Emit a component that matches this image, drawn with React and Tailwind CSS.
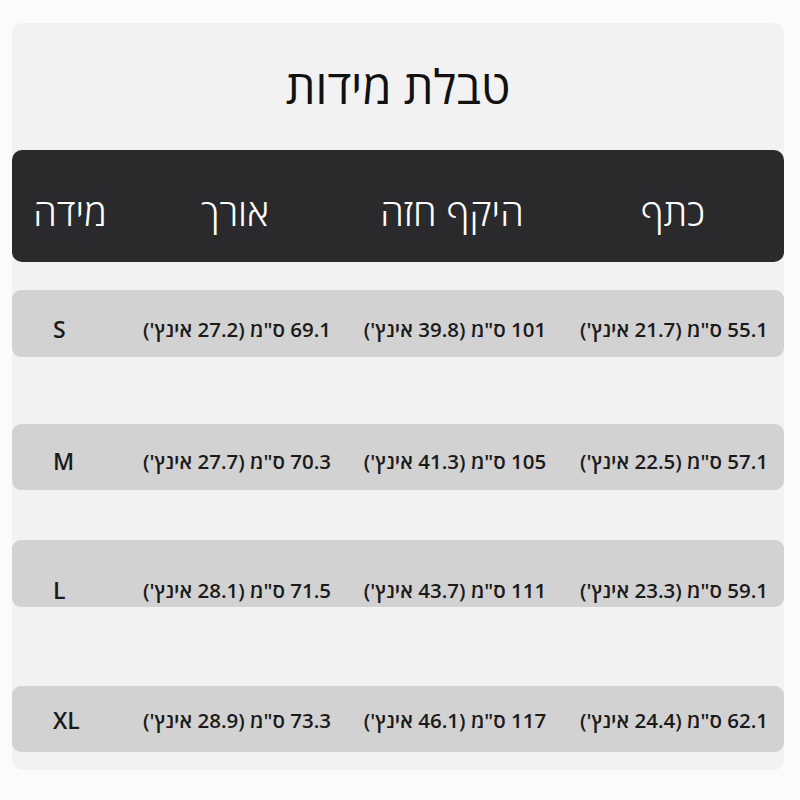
import React from "react";

const rows = [
  { size: "S", c1: "55.1 ס\"מ (21.7 אינץ')", c2: "101 ס\"מ (39.8 אינץ')", c3: "69.1 ס\"מ (27.2 אינץ')", cls: "mt-[28px] h-[67px] pt-[12px]" },
  { size: "M", c1: "57.1 ס\"מ (22.5 אינץ')", c2: "105 ס\"מ (41.3 אינץ')", c3: "70.3 ס\"מ (27.7 אינץ')", cls: "mt-[67px] h-[66px] pt-[8px]" },
  { size: "L", c1: "59.1 ס\"מ (23.3 אינץ')", c2: "111 ס\"מ (43.7 אינץ')", c3: "71.5 ס\"מ (28.1 אינץ')", cls: "mt-[50px] h-[67px] pt-[34px]" },
  { size: "XL", c1: "62.1 ס\"מ (24.4 אינץ')", c2: "117 ס\"מ (46.1 אינץ')", c3: "73.3 ס\"מ (28.9 אינץ')", cls: "mt-[79px] h-[66px] pt-[2px]" },
];

export default function App() {
  return (
    <div className="w-[800px] h-[800px] bg-[#fbfbfb] pt-[23px] pl-[12px]" style={{ fontFamily: '"Open Sans", "DejaVu Sans", sans-serif' }}>
      <div dir="rtl" className="w-[772px] h-[747px] bg-[#f2f2f2] rounded-[10px] flex flex-col">
        <div className="h-[127px] flex items-center justify-center text-[47px] text-[#111] font-normal">
          טבלת מידות
        </div>
        <div className="h-[112px] bg-[#2a2a2c] rounded-[10px] flex items-center pt-[10px] text-white text-[38px] font-light">
          <div className="w-[222px] text-center">כתף</div>
          <div className="w-[220px] text-center">היקף חזה</div>
          <div className="w-[214px] text-center">אורך</div>
          <div className="flex-1 text-center">מידה</div>
        </div>
        {rows.map((r) => (
          <div key={r.size} className={`${r.cls} bg-[#d2d2d2] rounded-[9px] flex items-center text-[20.5px] font-semibold text-[#1a1a1a]`}>
            <div className="w-[220px] text-center">{r.c1}</div>
            <div className="w-[218px] text-center">{r.c2}</div>
            <div className="w-[218px] text-center">{r.c3}</div>
            <div className="flex-1 text-left pl-[41px] text-[23px]" dir="ltr">{r.size}</div>
          </div>
        ))}
      </div>
    </div>
  );
}
